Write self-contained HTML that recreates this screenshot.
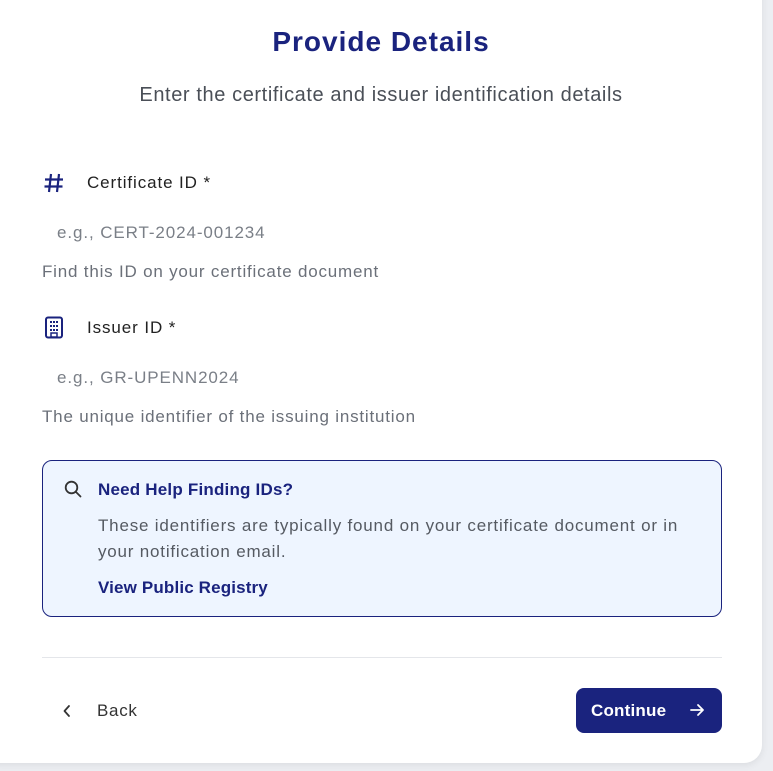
<!DOCTYPE html>
<html><head><style>
body{margin:0;width:773px;height:771px;background:#eceef2;font-family:"Liberation Sans",sans-serif;position:relative;overflow:hidden}
.card{position:absolute;left:-20px;top:-20px;width:782px;height:783px;background:#fff;border-radius:0 0 18px 18px;box-shadow:0 2px 8px rgba(0,0,0,.08)}
.a{position:absolute;white-space:nowrap}
</style></head><body>
<div class="card"></div>
<div class="a" style="left:0;width:762px;text-align:center;top:26px;font-size:28px;font-weight:bold;color:#1a237e;letter-spacing:1px">Provide Details</div>
<div class="a" style="left:0;width:762px;text-align:center;top:84px;font-size:20px;color:#4a4f57;letter-spacing:0.6px">Enter the certificate and issuer identification details</div>

<svg class="a" style="left:43px;top:172px" width="22" height="22" viewBox="0 0 22 22"><path d="M8 2L6 20M16 2L14 20M2 7.5h18M1.5 14.5h18" stroke="#1a237e" stroke-width="2.2" fill="none"/></svg>
<div class="a" style="left:87px;top:173px;font-size:17px;color:#222;letter-spacing:0.9px">Certificate ID *</div>
<div class="a" style="left:57px;top:223px;font-size:17px;color:#7a7f87;letter-spacing:0.9px">e.g., CERT-2024-001234</div>
<div class="a" style="left:42px;top:262px;font-size:17px;color:#6b7079;letter-spacing:0.8px">Find this ID on your certificate document</div>

<svg class="a" style="left:44px;top:316px" width="22" height="24" viewBox="0 0 22 24"><rect x="2" y="1.5" width="16" height="20" rx="2" fill="none" stroke="#1a237e" stroke-width="2"/><g fill="#1a237e"><rect x="6" y="5" width="2" height="2"/><rect x="9" y="5" width="2" height="2"/><rect x="12" y="5" width="2" height="2"/><rect x="6" y="9" width="2" height="2"/><rect x="9" y="9" width="2" height="2"/><rect x="12" y="9" width="2" height="2"/><rect x="6" y="13" width="2" height="2"/><rect x="9" y="13" width="2" height="2"/><rect x="12" y="13" width="2" height="2"/></g><rect x="7" y="17" width="6" height="4" fill="none" stroke="#1a237e" stroke-width="1.5"/></svg>
<div class="a" style="left:87px;top:318px;font-size:17px;color:#222;letter-spacing:0.9px">Issuer ID *</div>
<div class="a" style="left:57px;top:368px;font-size:17px;color:#7a7f87;letter-spacing:0.9px">e.g., GR-UPENN2024</div>
<div class="a" style="left:42px;top:407px;font-size:17px;color:#6b7079;letter-spacing:0.8px">The unique identifier of the issuing institution</div>

<div class="a" style="left:42px;top:460px;width:678px;height:155px;border:1px solid #1a237e;border-radius:10px;background:#eef5ff"></div>
<svg class="a" style="left:64px;top:480px" width="18" height="18" viewBox="0 0 18 18"><circle cx="7.5" cy="7.5" r="5.8" fill="none" stroke="#333" stroke-width="1.8"/><path d="M12 12l4.5 4.5" stroke="#333" stroke-width="1.8" stroke-linecap="round"/></svg>
<div class="a" style="left:98px;top:480px;font-size:17px;font-weight:bold;color:#1a237e;letter-spacing:0.2px">Need Help Finding IDs?</div>
<div class="a" style="left:98px;top:513px;font-size:17px;color:#555a62;line-height:26px;letter-spacing:0.8px">These identifiers are typically found on your certificate document or in<br>your notification email.</div>
<div class="a" style="left:98px;top:578px;font-size:17px;color:#1a237e;font-weight:bold;letter-spacing:0.15px">View Public Registry</div>

<div class="a" style="left:42px;top:657px;width:680px;height:1px;background:#e4e6ea"></div>
<svg class="a" style="left:62px;top:704px" width="10" height="14" viewBox="0 0 10 14"><path d="M7 2L2.5 7 7 12" fill="none" stroke="#333" stroke-width="1.8" stroke-linecap="round" stroke-linejoin="round"/></svg>
<div class="a" style="left:97px;top:701px;font-size:17px;color:#333;letter-spacing:0.7px">Back</div>
<div class="a" style="left:576px;top:688px;width:146px;height:45px;background:#1a237e;border-radius:8px"></div>
<div class="a" style="left:591px;top:701px;font-size:17px;font-weight:bold;color:#fff;letter-spacing:0.2px">Continue</div>
<svg class="a" style="left:689px;top:702px" width="16" height="16" viewBox="0 0 16 16"><path d="M2 8h12M9 3l5 5-5 5" fill="none" stroke="#fff" stroke-width="1.8" stroke-linecap="round" stroke-linejoin="round"/></svg>
</body></html>
